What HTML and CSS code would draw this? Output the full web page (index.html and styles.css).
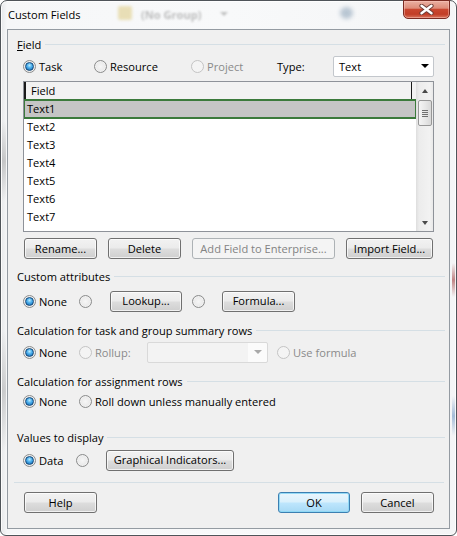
FILE: index.html
```html
<!DOCTYPE html>
<html lang="en">
<head>
<meta charset="utf-8">
<title>Custom Fields</title>
<link rel="stylesheet" href="styles.css">
</head>
<body>
<div class="window">
  <div class="titlebar">
    <div class="backdrop">
      <span class="bd-icon"></span>
      <span class="bd-text">(No Group)</span>
      <span class="bd-arrow"></span>
      <span class="bd-search"></span>
    </div>
    <span class="title">Custom Fields</span>
    <div class="close" aria-label="Close">
      <svg width="15" height="11" viewBox="0 0 15 11"><path d="M2.5 1.8 L12.5 9.2 M12.5 1.8 L2.5 9.2" stroke="#6b3b35" stroke-width="4.2" stroke-linecap="round"/><path d="M2.5 1.8 L12.5 9.2 M12.5 1.8 L2.5 9.2" stroke="#ffffff" stroke-width="2.4" stroke-linecap="round"/></svg>
    </div>
  </div>
  <div class="client">
    <div class="ghead mt-6"><span><u>F</u>ield</span><span class="rule"></span></div>
    <div class="row mt-3">
      <label class="opt w-task"><span class="radio on"></span><span>Task</span></label>
      <label class="opt w-res"><span class="radio"></span><span>Resource</span></label>
      <label class="opt w-proj dis"><span class="radio"></span><span>Project</span></label>
      <span class="type-label">Type:</span>
      <div class="combo type-combo"><span>Text</span><span class="arrow"></span></div>
    </div>
    <div class="list">
      <div class="list-body">
        <div class="list-head"><span class="col">Field</span></div>
        <div class="item sel">Text1</div>
        <div class="item">Text2</div>
        <div class="item">Text3</div>
        <div class="item">Text4</div>
        <div class="item">Text5</div>
        <div class="item">Text6</div>
        <div class="item">Text7</div>
        <div class="item">Text8</div>
      </div>
      <div class="vscroll">
        <span class="sbtn"><span class="tri-up"></span></span>
        <span class="thumb"><i></i><i></i><i></i><i></i></span>
        <span class="track"></span>
        <span class="sbtn"><span class="tri-down"></span></span>
      </div>
    </div>
    <div class="btnrow">
      <button class="btn w73">Rename...</button>
      <button class="btn w73">Delete</button>
      <button class="btn btn-dis w143">Add Field to Enterprise...</button>
      <button class="btn w87">Import Field...</button>
    </div>

    <div class="ghead mt-9"><span>Custom attributes</span><span class="rule"></span></div>
    <div class="row mt-6">
      <label class="opt w56"><span class="radio on"></span><span>None</span></label>
      <span class="opt w31"><span class="radio"></span></span>
      <button class="btn w72">Lookup...</button>
      <span class="opt w30 ml-10"><span class="radio"></span></span>
      <button class="btn w73">Formula...</button>
    </div>

    <div class="ghead mt-10"><span>Calculation for task and group summary rows</span><span class="rule"></span></div>
    <div class="row mt-3">
      <label class="opt w56"><span class="radio on"></span><span>None</span></label>
      <label class="opt w68 dis"><span class="radio"></span><span>Rollup:</span></label>
      <div class="combo combo-dis w121"><span class="arrow"></span></div>
      <label class="opt dis ml-9"><span class="radio"></span><span>Use formula</span></label>
    </div>

    <div class="ghead mt-10"><span>Calculation for assignment rows</span><span class="rule"></span></div>
    <div class="row mt-1">
      <label class="opt w56"><span class="radio on"></span><span>None</span></label>
      <label class="opt"><span class="radio"></span><span>Roll down unless manually entered</span></label>
    </div>

    <div class="ghead mt-17"><span>Values to display</span><span class="rule"></span></div>
    <div class="row mt-4">
      <label class="opt w53"><span class="radio on"></span><span>Data</span></label>
      <span class="opt w30"><span class="radio"></span></span>
      <button class="btn w128">Graphical Indicators...</button>
    </div>

    <div class="sep"></div>
    <div class="bottom">
      <button class="btn w73">Help</button>
      <button class="btn btn-default w72 push">OK</button>
      <button class="btn w73">Cancel</button>
    </div>
  </div>
</div>
</body>
</html>
```

FILE: styles.css
```css
* { box-sizing: border-box; }
html, body { margin: 0; padding: 0; }
body {
  width: 457px;
  height: 536px;
  overflow: hidden;
  background: #ffffff;
  font-family: "Open Sans", "Noto Sans", sans-serif;
  font-size: 11.1px;
  color: #000;
}

.window {
  position: relative;
  width: 457px;
  height: 536px;
  border: 1px solid #4f5459;
  border-radius: 7px 7px 6px 6px;
  background:
    linear-gradient(rgba(150,40,40,0), rgba(150,40,40,.55), rgba(150,40,40,0)) no-repeat 451px 262px / 4px 34px,
    linear-gradient(rgba(70,120,180,0), rgba(70,120,180,.45), rgba(70,120,180,0)) no-repeat 451px 395px / 4px 40px,
    linear-gradient(rgba(120,120,120,0), rgba(120,120,120,.35), rgba(120,120,120,0)) no-repeat 1px 120px / 4px 80px,
    linear-gradient(rgba(120,120,120,0), rgba(120,120,120,.3), rgba(120,120,120,0)) no-repeat 1px 330px / 4px 120px,
    linear-gradient(to right, #e6e8ea 0, #f6f7f8 6px, #f8f9fa 50%, #f4f5f6 100%);
  padding: 0 6px 6px;
  display: flex;
  flex-direction: column;
  box-shadow: inset 0 0 0 1px rgba(255,255,255,.85);
}

/* ---------- title bar ---------- */
.titlebar {
  position: relative;
  height: 28px;
  flex: none;
}
.backdrop { position: absolute; inset: 0; pointer-events: none; }
.bd-icon {
  position: absolute; left: 111px; top: 5px; width: 14px; height: 14px;
  background: #e3d49a; border-radius: 2px; filter: blur(1.6px); opacity: .7;
}
.bd-text {
  position: absolute; left: 134px; top: 6px; line-height: 16px;
  font-weight: bold; color: #8d8d8d; filter: blur(1.3px); opacity: .55;
}
.bd-arrow {
  position: absolute; left: 213px; top: 11px; width: 0; height: 0;
  border-left: 4px solid transparent; border-right: 4px solid transparent;
  border-top: 4px solid #9a9a9a; filter: blur(1.2px); opacity: .6;
}
.bd-search {
  position: absolute; left: 333px; top: 6px; width: 13px; height: 12px;
  background: #6f8ba6; border-radius: 50%; filter: blur(2px); opacity: .45;
}
.title {
  position: relative;
  display: block;
  line-height: 27px;
  padding-left: 1px;
  color: #000;
  text-shadow: 0 0 6px #fff, 0 0 3px #fff;
}
.close {
  position: absolute;
  top: -1px;
  right: 0;
  width: 47px;
  height: 19px;
  border: 1px solid #7a2b22;
  border-radius: 0 0 5px 5px;
  background: linear-gradient(#eab0a2 0%, #de8c79 42%, #c9462f 50%, #c23e27 78%, #d9755e 100%);
  box-shadow: inset 0 0 0 1px rgba(255,205,195,.45);
  display: flex;
  align-items: center;
  justify-content: center;
}

/* ---------- client area ---------- */
.client {
  flex: 1;
  background: #f0f0f0;
  border: 1px solid #949ba2;
  padding: 0 4px 0 0;
  display: flex;
  flex-direction: column;
}

.ghead {
  display: flex;
  align-items: center;
  height: 16px;
  padding-left: 9px;
  flex: none;
}
.rule {
  flex: 1;
  height: 1px;
  background: #d5dfe5;
  margin-left: 4px;
}

.mt-1 { margin-top: 1px; }
.mt-3 { margin-top: 3px; }
.mt-4 { margin-top: 4px; }
.mt-6 { margin-top: 6px; }
.mt-9 { margin-top: 9px; }
.mt-10 { margin-top: 10px; }
.mt-17 { margin-top: 17px; }
.ml-9 { margin-left: 9px; }
.ml-10 { margin-left: 10px; }

.row {
  display: flex;
  align-items: center;
  height: 22px;
  padding-left: 15px;
  flex: none;
}
.opt {
  display: flex;
  align-items: center;
  gap: 3px;
  flex: none;
  white-space: nowrap;
}
.w-task { width: 71px; }
.w-res { width: 97px; }
.w-proj { width: 86px; }
.type-label { width: 56px; flex: none; }
.w30 { width: 30px; }
.w31 { width: 31px; }
.w53 { width: 53px; }
.w56 { width: 56px; }
.w68 { width: 68px; }
.w72 { width: 72px; }
.w73 { width: 73px; }
.w87 { width: 87px; }
.w121 { width: 121px; }
.w128 { width: 128px; }
.w143 { width: 143px; }

.radio {
  width: 13px;
  height: 13px;
  border-radius: 50%;
  border: 1px solid #8b8c8c;
  background: radial-gradient(circle at 50% 50%, #f6f6f6 0, #ebebeb 55%, #d2d2d2 100%);
  box-shadow: inset 0 0 0 1px rgba(255,255,255,.45);
  flex: none;
  display: flex;
  align-items: center;
  justify-content: center;
}
.radio.on::after {
  content: "";
  width: 7px;
  height: 7px;
  border-radius: 50%;
  border: 1px solid #15497a;
  background: radial-gradient(circle at 50% 35%, #b8ecff 0, #45aaea 45%, #1262a8 100%);
}
.dis { color: #8a8a8a; }
.dis .radio {
  border-color: #c4c4c4;
  background: #f4f4f4;
  box-shadow: none;
}

.combo {
  height: 21px;
  border: 1px solid #c3c7cc;
  border-radius: 2px;
  background: #fff;
  display: flex;
  align-items: center;
  padding-left: 5px;
  flex: none;
}
.type-combo { width: 101px; }
.combo .arrow {
  margin-left: auto;
  margin-right: 4px;
  width: 0;
  height: 0;
  border-left: 4px solid transparent;
  border-right: 4px solid transparent;
  border-top: 4px solid #000;
}
.combo-dis {
  border-color: #d9d9d9;
  background: linear-gradient(to right, #f3f3f3 0, #f3f3f3 84%, #fbfbfb 84%);
}
.combo-dis .arrow { border-top-color: #a9a9a9; margin-right: 5px; }

/* ---------- list ---------- */
.list {
  margin: 4px 0 0 15px;
  width: 411px;
  height: 151px;
  border: 1px solid #8e9299;
  background: #fff;
  display: flex;
  flex: none;
}
.list-body {
  flex: 1;
  overflow: hidden;
}
.list-head {
  height: 18px;
  background: #f2f2f2;
  display: flex;
}
.list-head .col {
  width: 388px;
  border-left: 2px solid #1a1a1a;
  border-right: 1px solid #1a1a1a;
  padding-left: 5px;
  line-height: 18px;
}
.item {
  height: 18px;
  line-height: 18px;
  padding-left: 3px;
  white-space: nowrap;
}
.item.sel {
  background: #c5c5c5;
  outline: 2px solid #3b7a3b;
  outline-offset: -1px;
}
.vscroll {
  width: 17px;
  flex: none;
  display: flex;
  flex-direction: column;
  align-items: center;
  background: linear-gradient(to right, #dedede, #ececec 18%, #f2f2f2 80%, #e9e9e9);
}
.sbtn {
  width: 17px;
  height: 17px;
  flex: none;
  display: flex;
  align-items: center;
  justify-content: center;
}
.tri-up, .tri-down {
  width: 0;
  height: 0;
  border-left: 3.5px solid transparent;
  border-right: 3.5px solid transparent;
}
.tri-up { border-bottom: 4px solid #4a4a4a; }
.tri-down { border-top: 4px solid #4a4a4a; }
.thumb {
  margin-top: 1px;
  width: 14px;
  height: 26px;
  flex: none;
  border: 1px solid #979797;
  border-radius: 2px;
  background: linear-gradient(to right, #f5f5f5, #e8e8e8 50%, #d9d9d9);
  display: flex;
  flex-direction: column;
  align-items: center;
  justify-content: center;
  gap: 1px;
}
.thumb i {
  display: block;
  width: 6px;
  height: 1px;
  background: #707070;
}
.track { flex: 1; }

/* ---------- buttons ---------- */
.btnrow {
  display: flex;
  gap: 11px;
  padding-left: 16px;
  margin-top: 6px;
  height: 21px;
  flex: none;
}
.btn {
  height: 21px;
  border: 1px solid #707070;
  border-radius: 3px;
  background: linear-gradient(#f2f2f2 0%, #ebebeb 48%, #dddddd 52%, #cfcfcf 100%);
  box-shadow: inset 0 0 0 1px rgba(255,255,255,.7);
  font: inherit;
  color: #000;
  padding: 0 0 1px;
  display: flex;
  align-items: center;
  justify-content: center;
  flex: none;
  white-space: nowrap;
}
.btn-dis {
  border-color: #adb2b5;
  background: #f4f4f4;
  box-shadow: none;
  color: #838383;
}
.btn-default {
  border-color: #3c7fb1;
  background: linear-gradient(#eaf6fd 0%, #d9f0fc 48%, #bee6fd 52%, #a7d9f5 100%);
  box-shadow: inset 0 0 0 1px rgba(140,215,245,.9);
}

.sep {
  margin: 11px 0 0 6px;
  width: 430px;
  height: 1px;
  background: #d5dfe5;
  flex: none;
}
.bottom {
  display: flex;
  gap: 11px;
  margin-top: 9px;
  padding: 0 11px 0 16px;
  flex: none;
}
.push { margin-left: auto; }
```
